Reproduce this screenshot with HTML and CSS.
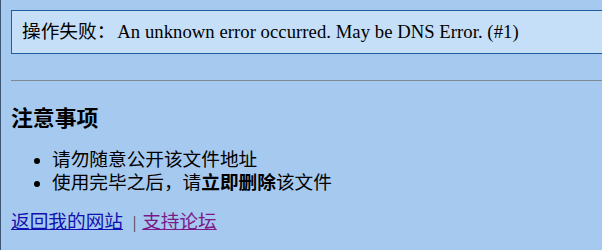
FILE: index.html
```html
<!DOCTYPE html>
<html lang="zh">
<head>
<meta charset="utf-8">
<title>操作失败</title>
<link rel="stylesheet" href="styles.css">
</head>
<body>
<div class="page">
  <div class="msg">操作失败：<span class="msg-en">An unknown error occurred. May be DNS Error. (#1)</span></div>
  <hr class="rule">
  <h3 class="title">注意事项</h3>
  <ul class="notes">
    <li>请勿随意公开该文件地址</li>
    <li>使用完毕之后，请<b>立即删除</b>该文件</li>
  </ul>
  <p class="links"><a class="link" href="#">返回我的网站</a><span class="sep">|</span><a class="link visited" href="#">支持论坛</a></p>
</div>
</body>
</html>
```

FILE: styles.css
```css
html, body {
  margin: 0;
  padding: 0;
  background: #a6c9ef;
}
.page {
  box-sizing: border-box;
  min-height: 250px;
  border-left: 1px solid #3d5673;
  padding: 10px 0 0 10px;
  font-family: "Liberation Serif", "Noto Sans CJK SC", serif;
  font-size: 14pt;
  line-height: 23px;
  color: #000;
}
.msg {
  border: 1px solid #1f5f9f;
  border-right: 0;
  background: #c6dff8;
  padding: 10px 10px;
  line-height: 22px;
}
.msg-en {
  margin-left: 2px;
  letter-spacing: 0.05px;
}
.rule {
  margin: 26px 0 0 0;
  border: 0;
  border-top: 1px solid #7f8a96;
  height: 0;
}
.title {
  margin: 25px 0 0 0;
  font-size: 1.17em;
  line-height: 26px;
  font-weight: bold;
}
.notes {
  margin: 16px 0 0 0;
  padding-left: 41px;
}
.links {
  margin: 16px 0 0 0;
}
.link {
  color: #1010b0;
}
.link.visited {
  color: #7a1a8a;
}
.sep {
  margin: 0 6px 0 10px;
  color: #333;
  font-size: 0.85em;
}
```
